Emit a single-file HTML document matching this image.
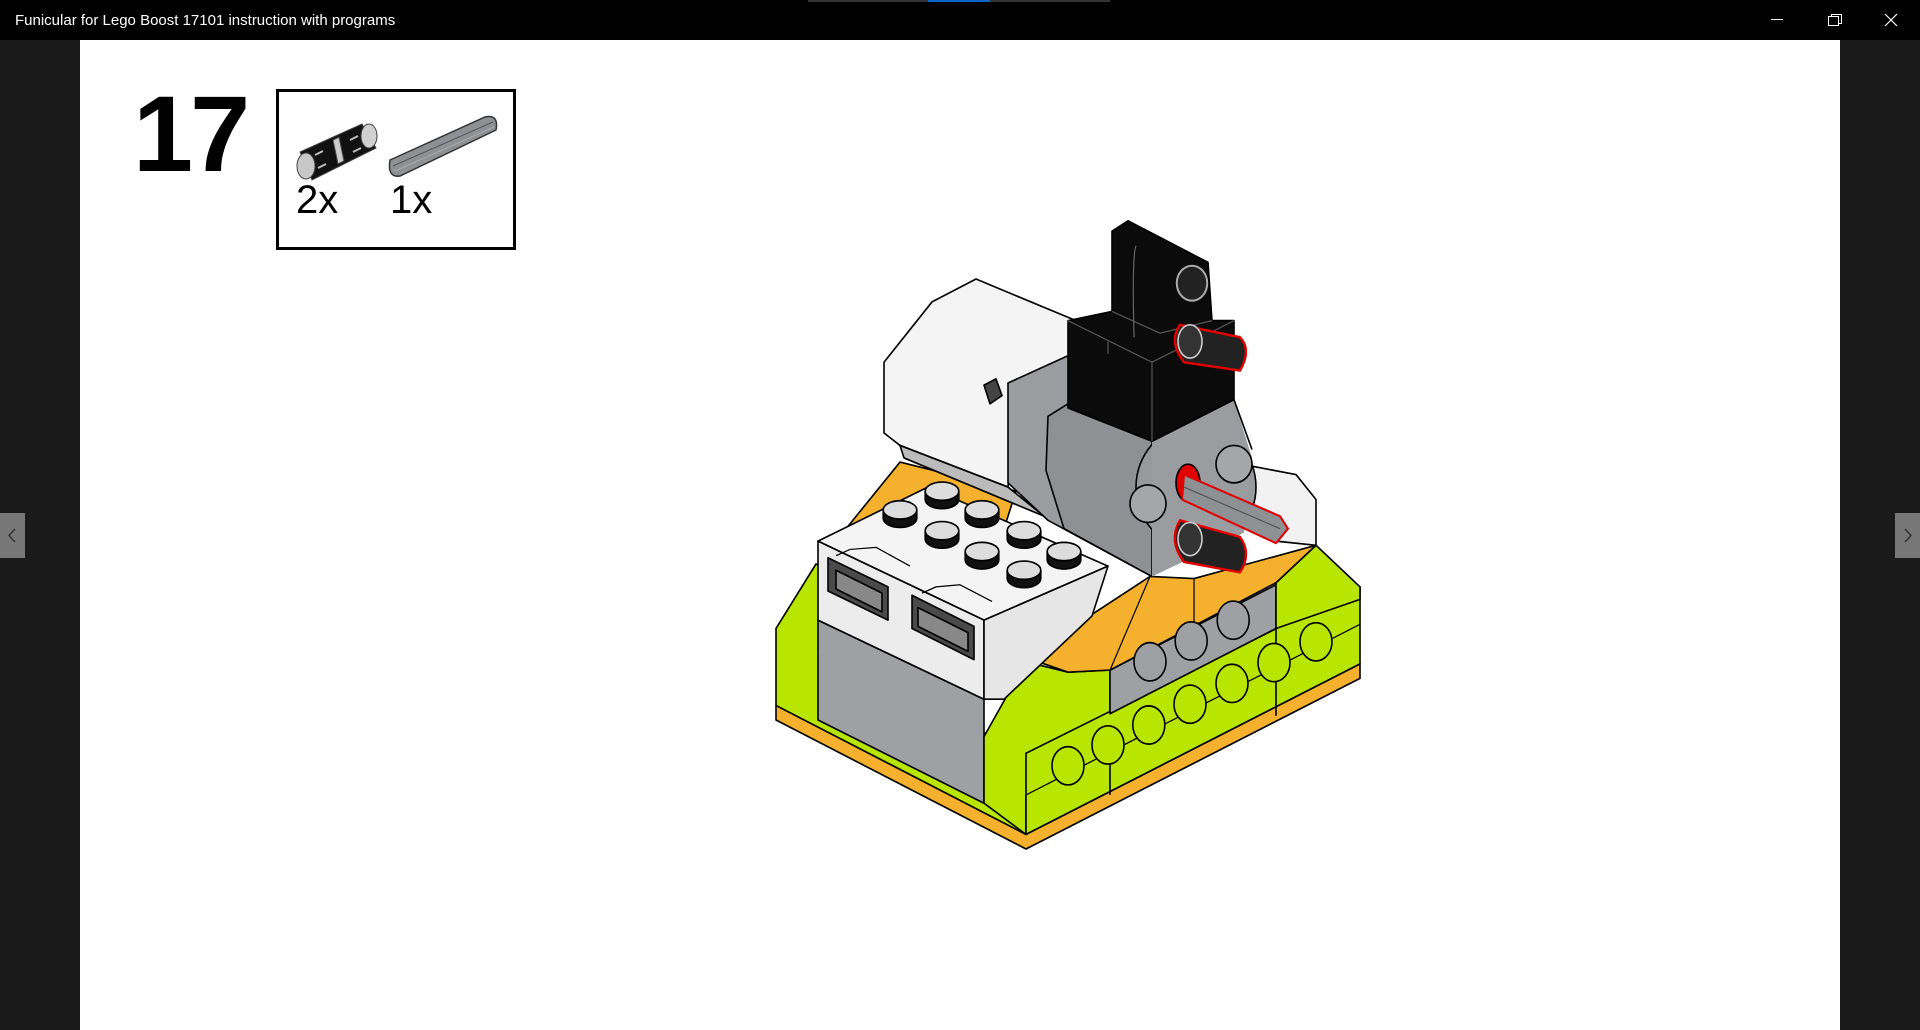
<!DOCTYPE html>
<html><head><meta charset="utf-8"><style>
html,body{margin:0;padding:0;width:1920px;height:1030px;overflow:hidden;background:#1a1a1a;font-family:"Liberation Sans",Arial,sans-serif}
#tb{position:absolute;left:0;top:0;width:1920px;height:40px;background:#000;color:#fff;font-size:15px}
#tb .t{position:absolute;left:15px;top:12px}
#page{position:absolute;left:80px;top:40px;width:1760px;height:990px;background:#fff}
.nav{position:absolute;top:513px;width:25px;height:45px;background:#777}
.num{position:absolute;left:133px;top:80px;font-size:108px;font-weight:bold;line-height:1;letter-spacing:-3px;color:#000}
.box{position:absolute;left:276px;top:89px;width:234px;height:155px;border:3px solid #000}
.q{position:absolute;font-size:40px;line-height:1;color:#000}
</style></head><body>
<div id="tb"><span class="t">Funicular for Lego Boost 17101 instruction with programs</span>
<div style="position:absolute;left:808px;top:0;width:302px;height:2px;background:#333"></div>
<div style="position:absolute;left:928px;top:0;width:62px;height:2px;background:#0a64c8"></div>
<svg style="position:absolute;left:1760px;top:0" width="160" height="40">
<line x1="11" y1="19.5" x2="23" y2="19.5" stroke="#fff" stroke-width="1"/>
<rect x="68.5" y="16.5" width="10" height="9" fill="none" stroke="#fff"/>
<path d="M71.5 16.5V14.5H81.5V23.5H78.5" fill="none" stroke="#fff"/>
<path d="M125 14L137 26M137 14L125 26" stroke="#fff" stroke-width="1.2"/>
</svg></div>
<div id="page"></div>
<div class="nav" style="left:0"><svg width="25" height="45"><path d="M15 16L9 22.5L15 29" fill="none" stroke="#333" stroke-width="1.5"/></svg></div>
<div class="nav" style="left:1895px"><svg width="25" height="45"><path d="M10 16L16 22.5L10 29" fill="none" stroke="#333" stroke-width="1.5"/></svg></div>
<div class="num">17</div>
<div class="box"></div>
<svg style="position:absolute;left:0;top:0" width="1920" height="1030">
<!-- pin -->
<g stroke="#444" stroke-width="1">
<path d="M300 152L362 124L376 148L312 180Z" fill="#111"/>
<ellipse cx="306" cy="166" rx="9" ry="13" fill="#c8c8c8"/>
<ellipse cx="369" cy="136" rx="8" ry="12" fill="#d0d0d0"/>
<path d="M333 140l6 -3 5 24 -6 3z" fill="#ccc"/>
<path d="M315 155l8 -4M350 140l8 -4M318 168l8 -4M353 152l8 -4" stroke="#bbb" stroke-width="2"/>
</g>
<!-- axle -->
<path d="M390 160L485 117Q499 114 496 130L400 176Q387 178 390 160Z" fill="#8d9194" stroke="#333" stroke-width="1.5"/>
<line x1="393" y1="166" x2="493" y2="122" stroke="#555" stroke-width="1"/>
<line x1="395" y1="171" x2="494" y2="127" stroke="#aaa" stroke-width="1"/>
</svg>
<div class="q" style="left:296px;top:180px">2x</div>
<div class="q" style="left:390px;top:180px">1x</div>

<svg style="position:absolute;left:0;top:0" width="1920" height="1030">
<g transform="translate(760,200) scale(0.4,0.416)" stroke="#000" stroke-width="4" stroke-linejoin="round">
<polygon points="40,1215 665,1525 1500,1115 1500,1150 665,1560 40,1250" fill="#f5b12e"/>
<polygon points="190,820 350,630 640,700 600,820" fill="#f5b12e"/>
<polygon points="40,1030 140,875 200,900 145,1080 560,1280 665,1330 665,1525 40,1215" fill="#b8e600"/>
<polygon points="145,1010 560,1200 560,1450 145,1250" fill="#9ea0a3"/>
<polygon points="560,1290 665,1110 770,1135 875,1130 875,1330 665,1430 665,1525 560,1450" fill="#b8e600"/>
<polygon points="665,1330 1500,930 1500,1115 665,1525" fill="#b8e600"/>
<line x1="665" y1="1430" x2="1500" y2="1020" stroke-width="3"/>
<line x1="875" y1="1330" x2="875" y2="1430"/>
<line x1="1290" y1="1030" x2="1290" y2="1240"/>
<polygon points="875,1130 1290,925 1290,1030 875,1235" fill="#9ea0a3"/>
<polygon points="1290,920 1390,830 1500,930 1500,960 1290,1030" fill="#b8e600"/>
<polygon points="665,1100 975,905 1085,910 1390,830 1290,920 875,1130 770,1135" fill="#f5b12e"/>
<line x1="1085" y1="910" x2="1085" y2="1030" stroke-width="3"/>
<line x1="975" y1="905" x2="875" y2="1130" stroke-width="3"/>
<polygon points="1230,640 1340,660 1390,720 1390,830 1290,820 1230,760" fill="#f2f2f2"/>
<polygon points="145,820 420,690 870,880 560,1010" fill="#f4f4f4"/>
<polygon points="145,820 560,1010 560,1200 145,1010" fill="#ececec"/>
<polygon points="560,1010 870,880 830,1000 610,1200 560,1200" fill="#e6e6e6"/>
<polygon points="170,860 320,930 320,1010 170,940" fill="#4a4a4a"/>
<polygon points="190,890 305,945 305,990 190,935" fill="#888"/>
<polygon points="380,950 535,1025 535,1105 380,1030" fill="#4a4a4a"/>
<polygon points="395,980 520,1040 520,1085 395,1025" fill="#888"/>
<path d="M190 855L225 840 290 835 375 880M405 945L440 930 500 925 580 965" fill="none" stroke-width="3"/>
<g fill="#111">
<path d="M413 700v20a42 22 0 0 0 84 0v-20z"/><ellipse cx="455" cy="700" rx="42" ry="22" fill="#ddd"/>
<path d="M308 745v20a42 22 0 0 0 84 0v-20z"/><ellipse cx="350" cy="745" rx="42" ry="22" fill="#ddd"/>
<path d="M513 745v20a42 22 0 0 0 84 0v-20z"/><ellipse cx="555" cy="745" rx="42" ry="22" fill="#ddd"/>
<path d="M413 795v20a42 22 0 0 0 84 0v-20z"/><ellipse cx="455" cy="795" rx="42" ry="22" fill="#ddd"/>
<path d="M618 795v20a42 22 0 0 0 84 0v-20z"/><ellipse cx="660" cy="795" rx="42" ry="22" fill="#ddd"/>
<path d="M513 845v20a42 22 0 0 0 84 0v-20z"/><ellipse cx="555" cy="845" rx="42" ry="22" fill="#ddd"/>
<path d="M718 845v20a42 22 0 0 0 84 0v-20z"/><ellipse cx="760" cy="845" rx="42" ry="22" fill="#ddd"/>
<path d="M618 890v20a42 22 0 0 0 84 0v-20z"/><ellipse cx="660" cy="890" rx="42" ry="22" fill="#ddd"/>
</g>
<polygon points="310,390 430,245 540,190 790,290 780,400 640,440 620,690 350,590 310,560" fill="#f4f4f4"/>
<polygon points="560,445 590,430 605,470 575,490" fill="#444"/>
<polygon points="350,590 620,690 710,760 360,620" fill="#bbb"/>
<polygon points="620,440 780,370 980,580 980,905 720,770 620,680" fill="#9a9c9f"/>
<polygon points="720,520 770,490 980,580 980,905 760,790 715,650" fill="#8e9093"/>
<circle cx="1090" cy="690" r="150" fill="#98999c"/>
<polygon points="980,580 1185,480 1230,620 1210,800 980,905" fill="#9a9c9f" stroke="none"/>
<path d="M980 580L1185 480 1230 600" fill="none"/>
<circle cx="1185" cy="635" r="45" fill="#a4a6a8"/>
<circle cx="970" cy="730" r="45" fill="#a4a6a8"/>
<polygon points="770,290 880,268 880,75 920,50 1120,150 1130,290 1185,290 1185,480 980,580 770,500" fill="#0b0b0b"/>
<path d="M880,268 L1000,320 1130,290 M770,290 L980,390 1185,290 M980,390 V580 M870,340 V370" fill="none" stroke="#555" stroke-width="3"/>
<path d="M940,110 Q930,130 935,330" fill="none" stroke="#666" stroke-width="3"/>
<ellipse cx="1080" cy="200" rx="38" ry="42" fill="#222" stroke="#aaa" stroke-width="5"/>
<ellipse cx="1070" cy="680" rx="30" ry="45" fill="#e00000"/>
<polygon points="1060,660 1300,760 1320,790 1290,825 1055,720" fill="#8d9194" stroke="#e00000" stroke-width="5"/>
<path d="M1060 690L1300 790" stroke="#555" stroke-width="3"/>
<g stroke="#e00000" stroke-width="6">
<path d="M1050 300L1200 330Q1230 360 1200 410L1060 390Q1020 340 1050 300Z" fill="#222"/>
<path d="M1050 770L1200 810Q1230 850 1200 895L1060 870Q1020 820 1050 770Z" fill="#222"/>
</g>
<ellipse cx="1075" cy="340" rx="30" ry="40" fill="#333" stroke="#ccc" stroke-width="4"/>
<ellipse cx="1075" cy="815" rx="30" ry="40" fill="#333" stroke="#ccc" stroke-width="4"/>
<g fill="#b8e600" stroke-width="4">
<ellipse cx="770" cy="1360" rx="40" ry="46"/><ellipse cx="870" cy="1310" rx="40" ry="46"/>
<ellipse cx="972" cy="1262" rx="40" ry="46"/><ellipse cx="1075" cy="1212" rx="40" ry="46"/>
<ellipse cx="1180" cy="1162" rx="40" ry="46"/><ellipse cx="1285" cy="1112" rx="40" ry="46"/>
<ellipse cx="1390" cy="1062" rx="40" ry="46"/>
</g>
<g fill="#9ea0a3">
<ellipse cx="975" cy="1110" rx="40" ry="46"/><ellipse cx="1078" cy="1060" rx="40" ry="46"/>
<ellipse cx="1183" cy="1010" rx="40" ry="46"/>
</g>
</g></svg>
</body></html>
